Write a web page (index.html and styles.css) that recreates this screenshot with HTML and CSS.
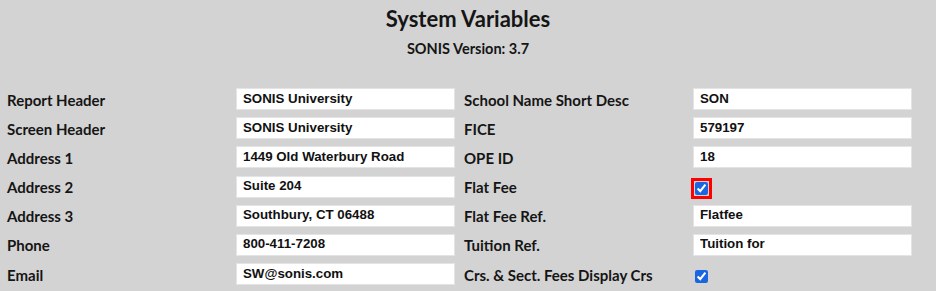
FILE: index.html
```html
<!DOCTYPE html>
<html lang="en">
<head>
    <meta charset="UTF-8">
    <meta name="viewport" content="width=device-width, initial-scale=1.0">
    <title>System Variables</title>
    <link rel="stylesheet" href="styles.css">
</head>
<body>
    <h2 class="title">System Variables</h2>
    <p class="version">SONIS Version: 3.7</p>
    <form class="vars">
        <label class="lbl">Report Header</label>
        <input class="txt" type="text" value="SONIS University">
        <label class="lbl">School Name Short Desc</label>
        <input class="txt" type="text" value="SON">

        <label class="lbl">Screen Header</label>
        <input class="txt" type="text" value="SONIS University">
        <label class="lbl">FICE</label>
        <input class="txt" type="text" value="579197">

        <label class="lbl">Address 1</label>
        <input class="txt" type="text" value="1449 Old Waterbury Road">
        <label class="lbl">OPE ID</label>
        <input class="txt" type="text" value="18">

        <label class="lbl">Address 2</label>
        <input class="txt" type="text" value="Suite 204">
        <label class="lbl">Flat Fee</label>
        <div class="chk-cell"><input class="chk focused" type="checkbox" checked></div>

        <label class="lbl">Address 3</label>
        <input class="txt" type="text" value="Southbury, CT 06488">
        <label class="lbl">Flat Fee Ref.</label>
        <input class="txt" type="text" value="Flatfee">

        <label class="lbl">Phone</label>
        <input class="txt" type="text" value="800-411-7208">
        <label class="lbl">Tuition Ref.</label>
        <input class="txt" type="text" value="Tuition for">

        <label class="lbl">Email</label>
        <input class="txt" type="text" value="SW@sonis.com">
        <label class="lbl">Crs. &amp; Sect. Fees Display Crs</label>
        <div class="chk-cell"><input class="chk" type="checkbox" checked></div>
    </form>
</body>
</html>
```

FILE: styles.css
```css
html, body {
    margin: 0;
    height: 100%;
    overflow: hidden;
    background-color: #d3d3d3;
    color: #151515;
    font-family: Lato, "Open Sans", sans-serif;
}
.title {
    margin: 6px 0 0;
    text-align: center;
    font-size: 22px;
    font-weight: 700;
    line-height: 26px;
}
.version {
    margin: 8px 0 0;
    text-align: center;
    font-size: 14.5px;
    font-weight: 700;
}
.vars {
    display: grid;
    grid-template-columns: 229px 228px 229px 220px;
    grid-auto-rows: 22px;
    row-gap: 7.2px;
    margin-top: 31px;
    padding-left: 7px;
}
.lbl {
    align-self: center;
    padding-top: 1px;
    font-size: 15px;
    font-weight: 700;
    white-space: nowrap;
}
.txt {
    box-sizing: border-box;
    width: 219px;
    height: 22px;
    margin: 0;
    padding: 0 0 2px 6px;
    border: 1px solid #e4e4e4;
    background: #fff;
    color: #111;
    font-family: "Liberation Sans", Arial, sans-serif;
    font-size: 13.3px;
    font-weight: 700;
}
.chk-cell {
    display: flex;
    align-items: center;
}
.chk {
    width: 13px;
    height: 13px;
    margin: 4px 0 0 2px;
    accent-color: #1a66e0;
}
.chk.focused {
    outline: 3px solid #ff0000;
    outline-offset: 1px;
}
```
